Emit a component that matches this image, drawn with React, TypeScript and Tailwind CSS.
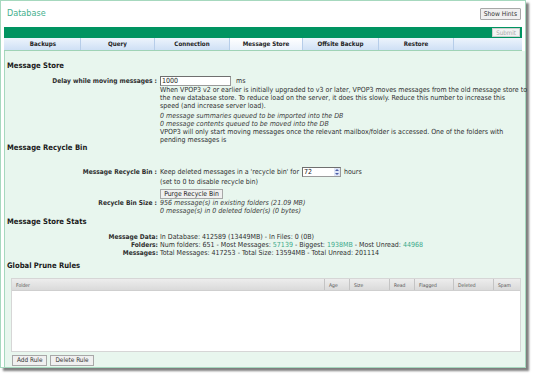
import React from "react";

const Label = ({ children }: { children: React.ReactNode }) => (
  <div className="w-[155px] shrink-0 text-right font-bold text-[6.6px] pr-[3px]">{children}</div>
);

const Heading = ({ children, cls }: { children: React.ReactNode; cls: string }) => (
  <div className={"pl-[2px] font-bold text-[7.6px] leading-[10px] text-[#1a1a1a] " + cls}>{children}</div>
);

const tabs = [
  { name: "Backups", w: "w-[75px]", active: false },
  { name: "Query", w: "w-[74px]", active: false },
  { name: "Connection", w: "w-[75px]", active: false },
  { name: "Message Store", w: "w-[73px]", active: true },
  { name: "Offsite Backup", w: "w-[76px]", active: false },
  { name: "Restore", w: "w-[75px]", active: false },
];

const cols = [
  { name: "Folder", w: "flex-1" },
  { name: "Age", w: "w-[25px]" },
  { name: "Size", w: "w-[40px]" },
  { name: "Read", w: "w-[25px]" },
  { name: "Flagged", w: "w-[39px]" },
  { name: "Deleted", w: "w-[40px]" },
  { name: "Spam", w: "w-[26px]" },
];

export default function App() {
  return (
    <div className="w-[534px] h-[376px] bg-white font-['DejaVu_Sans_Condensed','Liberation_Sans',sans-serif] text-[7px] leading-[8px] text-[#2e2e2e]">
      <div className="w-[526px] h-[368px] border border-[#a6d8be] bg-white shadow-[3px_3px_2px_rgba(0,0,0,0.5)] flex flex-col">
        {/* header */}
        <div className="h-[26px] shrink-0 flex items-start justify-between pl-[6px] pr-[4px]">
          <div className="text-[#45b08e] text-[9px] leading-[10px] mt-[7px]">Database</div>
          <button className="mt-[7px] h-[12px] px-[3px] border border-[#a8a8a8] bg-[#f0f0f0] text-[6.6px] leading-[10px] text-[#333] rounded-[1px]">
            Show Hints
          </button>
        </div>
        {/* green bar */}
        <div className="h-[11px] shrink-0 ml-[3px] w-[518px] bg-[#009461] flex items-center justify-end pr-[2px]">
          <button className="h-[9px] px-[3px] border border-[#cfcfcf] bg-[#f3f3f3] text-[#a8a8a8] text-[6.2px] leading-[7px]">
            Submit
          </button>
        </div>
        {/* tabs */}
        <div className="h-[13px] shrink-0 ml-[3px] w-[518px] flex bg-gradient-to-b from-[#edf4fc] to-[#cfe0f5] border-b border-[#9fd3b6] pl-[2px]">
          {tabs.map((t) => (
            <div
              key={t.name}
              className={
                t.w +
                " h-full flex items-center justify-center font-bold text-[6.2px] text-[#222] border-r border-[#b6cde9] " +
                (t.active ? "bg-gradient-to-b from-[#ffffff] to-[#e9f1fb]" : "")
              }
            >
              {t.name}
            </div>
          ))}
        </div>
        {/* content */}
        <div className="flex-1 ml-[3px] bg-[#e8f6ee] border-l border-[#a6d8be] flex flex-col">
          <Heading cls="mt-[10px]">Message Store</Heading>
          <div className="flex mt-[5px]">
            <Label>
              <span className="block leading-[10px]">Delay while moving messages :</span>
            </Label>
            <div className="whitespace-nowrap">
              <div className="flex items-center h-[10px]">
                <div className="w-[71px] h-[10px] bg-white border border-[#9a9a9a] border-t-[#6f6f6f] border-l-[#6f6f6f] pl-[1px] leading-[8px] text-[#222]">
                  1000
                </div>
                <span className="ml-[5px]">ms</span>
              </div>
              <div className="mt-[0px]">
                When VPOP3 v2 or earlier is initially upgraded to v3 or later, VPOP3 moves messages from the old message store to
                <br />
                the new database store. To reduce load on the server, it does this slowly. Reduce this number to increase this
                <br />
                speed (and increase server load).
              </div>
              <div className="italic mt-[2px] text-[#3a3a3a]">
                0 message summaries queued to be imported into the DB
                <br />0 message contents queued to be moved into the DB
              </div>
              <div>
                VPOP3 will only start moving messages once the relevant mailbox/folder is accessed. One of the folders with
                <br />
                pending messages is
              </div>
            </div>
          </div>

          <Heading cls="-mt-[1px]">Message Recycle Bin</Heading>
          <div className="flex mt-[14px]">
            <Label>
              <span className="block leading-[10px]">Message Recycle Bin :</span>
            </Label>
            <div className="whitespace-nowrap">
              <div className="flex items-center h-[10px]">
                <span>Keep deleted messages in a 'recycle bin' for</span>
                <div className="ml-[3px] w-[39px] h-[10px] bg-white border border-[#9a9a9a] border-t-[#6f6f6f] border-l-[#6f6f6f] flex items-center justify-between pl-[1px] text-[#222]">
                  <span className="leading-[8px]">72</span>
                  <svg width="6" height="8" viewBox="0 0 6 8">
                    <rect x="0" y="0" width="6" height="8" fill="#dfe6f7" />
                    <path d="M1 3 L3 1 L5 3 Z" fill="#4d5fa8" />
                    <path d="M1 5 L3 7 L5 5 Z" fill="#4d5fa8" />
                  </svg>
                </div>
                <span className="ml-[3px]">hours</span>
              </div>
              <div className="mt-[1px]">(set to 0 to disable recycle bin)</div>
              <button className="mt-[3px] h-[10px] w-[63px] border border-[#a8a8a8] bg-[#f0f0f0] text-[6.8px] leading-[8px] text-[#222]">
                Purge Recycle Bin
              </button>
            </div>
          </div>
          <div className="flex">
            <Label>Recycle Bin Size :</Label>
            <div className="italic whitespace-nowrap text-[#3a3a3a]">
              956 message(s) in existing folders (21.09 MB)
              <br />0 message(s) in 0 deleted folder(s) (0 bytes)
            </div>
          </div>

          <Heading cls="mt-[2px]">Message Store Stats</Heading>
          <div className="mt-[6px] whitespace-nowrap">
            <div className="flex">
              <div className="w-[155px] shrink-0 text-right font-bold text-[6.6px] pr-[2px]">Message Data:</div>
              <div>In Database: 412589 (13449MB) - In Files: 0 (0B)</div>
            </div>
            <div className="flex">
              <div className="w-[155px] shrink-0 text-right font-bold text-[6.6px] pr-[2px]">Folders:</div>
              <div>
                Num folders: 651 - Most Messages: <span className="text-[#3aa98a]">57139</span> - Biggest:{" "}
                <span className="text-[#3aa98a]">1938MB</span> - Most Unread: <span className="text-[#3aa98a]">44968</span>
              </div>
            </div>
            <div className="flex">
              <div className="w-[155px] shrink-0 text-right font-bold text-[6.6px] pr-[2px]">Messages:</div>
              <div>Total Messages: 417253 - Total Size: 13594MB - Total Unread: 201114</div>
            </div>
          </div>

          <Heading cls="mt-[4px]">Global Prune Rules</Heading>
          <div className="ml-[6px] w-[510px] h-[74px] mt-[7px] bg-white border border-[#d6d6d6] flex flex-col">
            <div className="h-[12px] flex bg-gradient-to-b from-[#ededed] to-[#dadada] border-b border-[#cfcfcf]">
              {cols.map((c) => (
                <div
                  key={c.name}
                  className={c.w + " h-full flex items-center pl-[4px] text-[5px] text-[#555] border-r border-[#c4c4c4] last:border-r-0"}
                >
                  {c.name}
                </div>
              ))}
            </div>
          </div>
          <div className="flex gap-[3px] ml-[7px] mt-[3px]">
            <button className="h-[11px] px-[4px] border border-[#a8a8a8] bg-[#f0f0f0] text-[6.4px] leading-[9px] text-[#333]">
              Add Rule
            </button>
            <button className="h-[11px] px-[4px] border border-[#a8a8a8] bg-[#f0f0f0] text-[6.4px] leading-[9px] text-[#333]">
              Delete Rule
            </button>
          </div>
        </div>
      </div>
    </div>
  );
}
